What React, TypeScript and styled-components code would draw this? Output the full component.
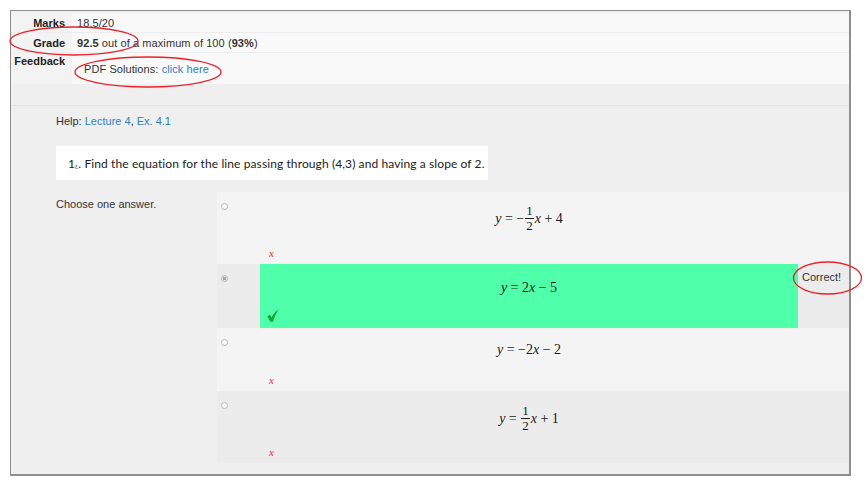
import React from "react";
import styled, { createGlobalStyle } from "styled-components";

const Global = createGlobalStyle`
  html, body { margin: 0; padding: 0; background: #fff; }
  body {
    font-family: "Liberation Sans", Arial, sans-serif;
    font-size: 11px;
    color: #333;
  }
`;

const Page = styled.div`
  position: relative;
  width: 868px;
  height: 487px;
  padding: 10px 0 0 10px;
  box-sizing: border-box;
`;

const Frame = styled.div`
  width: 841px;
  height: 466px;
  box-sizing: border-box;
  border: 1px solid #8e8e8e;
  border-right-width: 2px;
  border-bottom-width: 2px;
  display: flex;
  flex-direction: column;
  background: #efefef;
`;

const Summary = styled.div`
  display: grid;
  grid-template-columns: 61px 1fr;
  border-top: 2px solid #f0f0f0;
  background: #f9f9f9;
`;

const SumLabel = styled.div<{ $h: number; $top?: boolean }>`
  height: ${(p) => p.$h}px;
  box-sizing: border-box;
  background: #f3f3f3;
  font-weight: bold;
  color: #222;
  text-align: right;
  padding-right: 7px;
  display: flex;
  justify-content: flex-end;
  align-items: ${(p) => (p.$top ? "flex-start" : "center")};
  padding-top: ${(p) => (p.$top ? 2 : 0)}px;
  border-bottom: ${(p) => (p.$top ? "none" : "1px solid #ececec")};
  white-space: nowrap;
`;

const SumValue = styled.div<{ $h: number; $top?: boolean }>`
  height: ${(p) => p.$h}px;
  box-sizing: border-box;
  display: flex;
  align-items: ${(p) => (p.$top ? "flex-start" : "center")};
  padding-left: ${(p) => (p.$top ? 12 : 5)}px;
  padding-top: ${(p) => (p.$top ? 10 : 0)}px;
  border-bottom: ${(p) => (p.$top ? "none" : "1px solid #ececec")};
  color: #333;
  white-space: pre;
  letter-spacing: 0.08px;
`;

const Link = styled.span`
  color: #2f7fc4;
`;

const Band = styled.div`
  height: 21px;
  background: #efefef;
  border-bottom: 1px solid #e2e2e2;
`;

const Main = styled.div`
  flex: 1;
  display: flex;
  flex-direction: column;
  padding: 8px 0 0 45px;
  background: #efefef;
`;

const Help = styled.div`
  line-height: 14px;
  color: #333;
`;

const QuestionBox = styled.div`
  margin-top: 18px;
  width: 432px;
  height: 34px;
  box-sizing: border-box;
  background: #fff;
  padding-left: 12px;
  display: flex;
  align-items: center;
  font-family: Lato, "Open Sans", sans-serif;
  font-size: 12px;
  letter-spacing: 0.1px;
  color: #222;
  white-space: pre;
`;

const Tiny = styled.span`
  font-size: 7px;
  position: relative;
  top: 3px;
  color: #666;
`;

const AnswerGrid = styled.div`
  margin-top: 12px;
  display: grid;
  grid-template-columns: 161px 1fr;
`;

const Choose = styled.div`
  padding-top: 5px;
  line-height: 14px;
`;

const Answers = styled.div`
  display: flex;
  flex-direction: column;
`;

const Row = styled.div<{ $h: number; $alt?: boolean }>`
  height: ${(p) => p.$h}px;
  display: grid;
  grid-template-columns: 43px 1fr 51px;
  background: ${(p) => (p.$alt ? "#ececec" : "#f4f4f4")};
`;

const RadioCell = styled.div`
  padding: 11px 0 0 4px;
`;

const Radio = styled.div<{ $checked?: boolean }>`
  width: 7px;
  height: 7px;
  box-sizing: border-box;
  border-radius: 50%;
  border: 1px solid #b9b9b9;
  background: ${(p) =>
    p.$checked ? "radial-gradient(circle, #a8a8a8 0 1.6px, #e6e6e6 2px)" : "#fafafa"};
`;

const Content = styled.div<{ $correct?: boolean; $top: number }>`
  display: flex;
  flex-direction: column;
  align-items: center;
  padding: ${(p) => p.$top}px 0 6px;
  box-sizing: border-box;
  background: ${(p) => (p.$correct ? "#4fffaa" : "transparent")};
`;

const Mark = styled.div`
  margin-top: auto;
  align-self: flex-start;
  margin-left: 7px;
  height: 11px;
  display: flex;
  align-items: flex-end;
`;

const Cross = styled.span`
  font-family: "Liberation Serif", serif;
  font-style: italic;
  font-weight: bold;
  font-size: 10px;
  line-height: 9px;
  color: #ff4a4a;
  margin-left: 2px;
`;

const FeedbackCell = styled.div`
  padding: 6px 0 0 4px;
  color: #333;
  line-height: 14px;
`;

const Eq = styled.div`
  font-family: "Liberation Serif", "Times New Roman", serif;
  font-size: 14px;
  color: #1a1a1a;
  display: inline-flex;
  align-items: center;
  white-space: pre;
  line-height: 16px;
`;

const V = styled.i`
  font-family: "Liberation Serif", "Times New Roman", serif;
  font-style: italic;
`;

const Frac = styled.span`
  display: inline-flex;
  flex-direction: column;
  align-items: center;
  font-size: 13px;
  line-height: 14px;
  margin: 0 1px;
`;

const Num = styled.span`
  border-bottom: 1px solid #222;
  padding: 0 1px;
  line-height: 14px;
`;

const Overlay = styled.svg`
  position: absolute;
  left: 0;
  top: 0;
  pointer-events: none;
`;

const Check = () => (
  <svg width="12" height="13" viewBox="0 0 12 13">
    <path
      d="M0.3 7.4 L3 5.8 L4.6 8.6 C6.3 5.2 8.4 2.4 11.7 0.3 C9.6 3.4 7.6 7.6 6 12.7 L3.3 12.7 Z"
      fill="#12a638"
    />
  </svg>
);

const Half = () => (
  <Frac>
    <Num>1</Num>
    <span>2</span>
  </Frac>
);

const answers = [
  {
    h: 72,
    alt: false,
    top: 12,
    eq: (
      <Eq>
        <V>y</V>
        {" = −"}
        <Half />
        <V>x</V>
        {" + 4"}
      </Eq>
    ),
  },
  {
    h: 64,
    alt: true,
    top: 16,
    correct: true,
    checked: true,
    eq: (
      <Eq>
        <V>y</V>
        {" = 2"}
        <V>x</V>
        {" − 5"}
      </Eq>
    ),
  },
  {
    h: 63,
    alt: false,
    top: 14,
    eq: (
      <Eq>
        <V>y</V>
        {" = −2"}
        <V>x</V>
        {" − 2"}
      </Eq>
    ),
  },
  {
    h: 72,
    alt: true,
    top: 13,
    eq: (
      <Eq>
        <V>y</V>
        {" = "}
        <Half />
        <V>x</V>
        {" + 1"}
      </Eq>
    ),
  },
];

export default function App() {
  return (
    <Page>
      <Global />
      <Frame>
        <Summary>
          <SumLabel $h={20}>Marks</SumLabel>
          <SumValue $h={20}>18.5/20</SumValue>
          <SumLabel $h={20}>Grade</SumLabel>
          <SumValue $h={20}>
            <b>92.5</b> out of a maximum of 100 (<b>93%</b>)
          </SumValue>
          <SumLabel $h={31} $top>
            Feedback
          </SumLabel>
          <SumValue $h={31} $top>
            PDF Solutions: <Link>click here</Link>
          </SumValue>
        </Summary>
        <Band />
        <Main>
          <Help>
            Help: <Link>Lecture 4</Link>, <Link>Ex. 4.1</Link>
          </Help>
          <QuestionBox>
            1<Tiny>ɛ</Tiny>. Find the equation for the line passing through (4,3) and having a slope of 2.
          </QuestionBox>
          <AnswerGrid>
            <Choose>Choose one answer.</Choose>
            <Answers>
              {answers.map((a, i) => (
                <Row key={i} $h={a.h} $alt={a.alt}>
                  <RadioCell>
                    <Radio $checked={a.checked} />
                  </RadioCell>
                  <Content $correct={a.correct} $top={a.top}>
                    {a.eq}
                    <Mark>{a.correct ? <Check /> : <Cross>x</Cross>}</Mark>
                  </Content>
                  <FeedbackCell>{a.correct ? "Correct!" : ""}</FeedbackCell>
                </Row>
              ))}
            </Answers>
          </AnswerGrid>
        </Main>
      </Frame>
      <Overlay width="868" height="487" viewBox="0 0 868 487">
        <g fill="none" stroke="#e8222a" strokeWidth="1.3">
          <ellipse cx="74" cy="41" rx="64" ry="14" />
          <ellipse cx="148" cy="72" rx="73" ry="15" />
          <ellipse cx="827.5" cy="278" rx="34" ry="16" />
        </g>
      </Overlay>
    </Page>
  );
}
